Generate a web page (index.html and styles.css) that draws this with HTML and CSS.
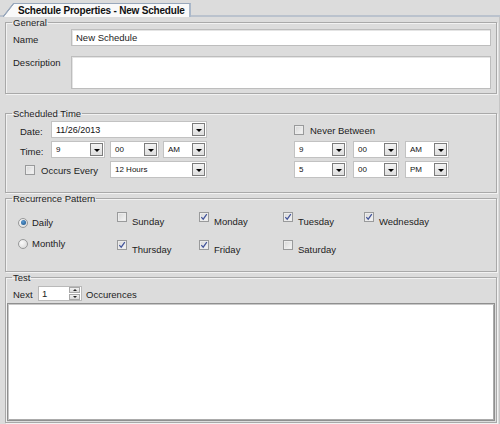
FILE: index.html
```html
<!DOCTYPE html>
<html lang="en">
<head>
    <meta charset="UTF-8">
    <title>Schedule Properties</title>
    <link rel="stylesheet" href="styles.css">
</head>
<body>
    <div class="tabs">
        <span class="tab-slant"></span>
        <span class="tab">Schedule Properties - New Schedule</span>
    </div>

    <div class="page">
        <!-- General -->
        <fieldset class="group general">
            <legend>General</legend>
            <div class="general-body">
                <span class="lbl lbl-name">Name</span>
                <div class="textbox">New Schedule</div>
                <span class="lbl">Description</span>
                <div class="textbox"></div>
            </div>
        </fieldset>

        <!-- Scheduled Time -->
        <fieldset class="group sched">
            <legend>Scheduled Time</legend>
            <div class="sched-body">
                <div class="rows">
                    <div class="row">
                        <span class="row-lbl">Date:</span>
                        <div class="combo big" style="width: 156px;"><span class="val">11/26/2013</span><span class="drop"></span></div>
                    </div>
                    <div class="row">
                        <span class="row-lbl">Time:</span>
                        <div class="combo" style="width: 54px;"><span class="val">9</span><span class="drop"></span></div>
                        <div class="combo" style="width: 49px; margin-left: 5px;"><span class="val">00</span><span class="drop"></span></div>
                        <div class="combo" style="width: 44px; margin-left: 4px;"><span class="val">AM</span><span class="drop"></span></div>
                    </div>
                    <div class="row">
                        <span class="chk occurs-chk"></span>
                        <span class="chk-lbl">Occurs Every</span>
                        <div class="combo push" style="width: 97px;"><span class="val">12 Hours</span><span class="drop"></span></div>
                    </div>
                </div>
                <div class="rows right-rows">
                    <div class="row">
                        <span class="chk"></span>
                        <span class="chk-lbl">Never Between</span>
                    </div>
                    <div class="row">
                        <div class="combo" style="width: 53px;"><span class="val">9</span><span class="drop"></span></div>
                        <div class="combo" style="width: 46px; margin-left: 6px;"><span class="val">00</span><span class="drop"></span></div>
                        <div class="combo" style="width: 44px; margin-left: 6px;"><span class="val">AM</span><span class="drop"></span></div>
                    </div>
                    <div class="row">
                        <div class="combo" style="width: 53px;"><span class="val">5</span><span class="drop"></span></div>
                        <div class="combo" style="width: 46px; margin-left: 6px;"><span class="val">00</span><span class="drop"></span></div>
                        <div class="combo" style="width: 44px; margin-left: 6px;"><span class="val">PM</span><span class="drop"></span></div>
                    </div>
                </div>
            </div>
        </fieldset>

        <!-- Recurrence Pattern -->
        <fieldset class="group recur">
            <legend>Recurrence Pattern</legend>
            <div class="recur-body">
                <div class="radios">
                    <div class="radio-item"><span class="radio on"><span class="dot"></span></span>Daily</div>
                    <div class="radio-item"><span class="radio"></span>Monthly</div>
                </div>
                <div class="days">
                    <div class="day"><span class="chk"></span><span class="day-lbl">Sunday</span></div>
                    <div class="day"><span class="chk on"><svg width="8" height="8" viewBox="0 0 8 8"><path d="M1.3 4.2 L3.2 6.2 L6.8 1.2" fill="none" stroke="#41539a" stroke-width="1.2"/></svg></span><span class="day-lbl">Monday</span></div>
                    <div class="day"><span class="chk on"><svg width="8" height="8" viewBox="0 0 8 8"><path d="M1.3 4.2 L3.2 6.2 L6.8 1.2" fill="none" stroke="#41539a" stroke-width="1.2"/></svg></span><span class="day-lbl">Tuesday</span></div>
                    <div class="day"><span class="chk on"><svg width="8" height="8" viewBox="0 0 8 8"><path d="M1.3 4.2 L3.2 6.2 L6.8 1.2" fill="none" stroke="#41539a" stroke-width="1.2"/></svg></span><span class="day-lbl">Wednesday</span></div>
                    <div class="day"><span class="chk on"><svg width="8" height="8" viewBox="0 0 8 8"><path d="M1.3 4.2 L3.2 6.2 L6.8 1.2" fill="none" stroke="#41539a" stroke-width="1.2"/></svg></span><span class="day-lbl">Thursday</span></div>
                    <div class="day"><span class="chk on"><svg width="8" height="8" viewBox="0 0 8 8"><path d="M1.3 4.2 L3.2 6.2 L6.8 1.2" fill="none" stroke="#41539a" stroke-width="1.2"/></svg></span><span class="day-lbl">Friday</span></div>
                    <div class="day"><span class="chk"></span><span class="day-lbl">Saturday</span></div>
                </div>
            </div>
        </fieldset>

        <!-- Test -->
        <fieldset class="group test">
            <legend>Test</legend>
            <div class="test-body">
                <div class="next-row">
                    <span class="next-lbl">Next</span>
                    <div class="spinner">
                        <span class="val">1</span>
                        <span class="spin-btns">
                            <span class="spin up"></span>
                            <span class="spin down"></span>
                        </span>
                    </div>
                    <span class="occ-lbl">Occurences</span>
                </div>
                <div class="results"></div>
            </div>
        </fieldset>
    </div>
</body>
</html>
```

FILE: styles.css
```css
* {
    box-sizing: border-box;
}
body {
    margin: 0;
    width: 500px;
    height: 424px;
    overflow: hidden;
    background-color: #dcdcdc;
    font-family: "Liberation Sans", Arial, sans-serif;
    font-size: 9.5px;
    color: #1c1c1c;
}

/* Tab strip */
.tabs {
    display: flex;
    align-items: flex-end;
    height: 17px;
    padding-left: 3px;
    border-bottom: 2px solid #bac2cd;
}
.tab-slant {
    width: 11px;
    height: 14px;
    margin-bottom: -2px;
    background: linear-gradient(to bottom right, transparent calc(50% - 1px), #98a7bb calc(50% - 0.4px), #98a7bb calc(50% + 0.4px), #f9f9f9 calc(50% + 1px));
}
.tab {
    height: 14px;
    margin-bottom: -2px;
    padding: 0 4px 0 4px;
    border-top: 1px solid #98a7bb;
    border-right: 2px solid #aab8ca;
    background-color: #f9f9f9;
    font-weight: bold;
    font-size: 10px;
    letter-spacing: -0.2px;
    line-height: 13px;
    color: #111;
}

.page {
    height: 407px;
    padding: 0 2px 0 5px;
    border-right: 1px solid #c6c6c6;
}

/* Group boxes */
.group {
    margin: 0;
    padding: 0;
    min-width: 0;
    border: 1px solid #a9a9a9;
    box-shadow: inset 1px 1px 0 #f2f2f2, 1px 1px 0 #f2f2f2;
}
.group legend {
    margin-left: 6px;
    padding: 0 1px;
    line-height: 11px;
    font-size: 9.5px;
    color: #1e1e1e;
}
.general {
    height: 77px;
}
.sched {
    height: 85px;
    margin-top: 14px;
}
.recur {
    height: 79px;
}
.test {
    height: 151px;
}

/* General */
.general-body {
    display: grid;
    grid-template-columns: 58px 420px;
    grid-template-rows: 17px 33px;
    row-gap: 10px;
    padding: 1px 5px 0 7px;
}
.lbl {
    line-height: 13px;
}
.lbl-name {
    padding-top: 4px;
}
.textbox {
    background-color: #fff;
    border: 1px solid #bdbdbd;
    box-shadow: inset 1px 1px 0 #e4e4e4;
    padding: 2px 4px;
    line-height: 12px;
}

/* Scheduled time */
.sched-body {
    display: flex;
    padding: 2px 0 0 14px;
}
.rows {
    display: flex;
    flex-direction: column;
    gap: 3px;
    width: 187px;
}
.right-rows {
    margin-left: 87px;
}
.row {
    display: flex;
    align-items: center;
    height: 17px;
}
.row-lbl {
    width: 31px;
    padding-top: 3px;
}
.combo {
    display: flex;
    align-items: center;
    height: 17px;
    background-color: #fff;
    border: 1px solid #c2c2c2;
}
.combo .val {
    flex: 1;
    padding-left: 4px;
    font-size: 8px;
    color: #111;
}
.combo.big .val {
    font-size: 9px;
}
.combo.push {
    margin-left: auto;
}
.drop {
    display: flex;
    justify-content: center;
    align-items: center;
    width: 13px;
    height: 13px;
    margin-right: 1px;
    border: 1px solid #7c7c7c;
    background: linear-gradient(#f3f3f3, #dedede);
}
.drop::after {
    content: "";
    margin-top: 2px;
    border-top: 3px solid #000;
    border-left: 3.5px solid transparent;
    border-right: 3.5px solid transparent;
}

/* Check boxes and radios */
.chk {
    display: inline-flex;
    justify-content: center;
    align-items: center;
    flex-shrink: 0;
    width: 10px;
    height: 10px;
    border: 1px solid #999a9b;
    background: linear-gradient(135deg, #d6d6d6, #f7f7f7);
    box-shadow: inset 0 0 0 1px #ececec;
}
.occurs-chk {
    margin-left: 5px;
}
.chk-lbl {
    margin-left: 6px;
    padding-top: 2px;
}
.recur-body {
    display: flex;
    padding: 8px 0 0 12px;
}
.radios {
    display: flex;
    flex-direction: column;
    gap: 8px;
    width: 99px;
    padding-top: 4px;
}
.radio-item {
    display: flex;
    align-items: center;
    gap: 4px;
    height: 13px;
    line-height: 13px;
}
.radio {
    display: inline-flex;
    justify-content: center;
    align-items: center;
    width: 10px;
    height: 10px;
    border-radius: 50%;
    border: 1px solid #979899;
    background: radial-gradient(circle at 35% 35%, #fafafa, #d4d4d4);
}
.radio .dot {
    width: 5px;
    height: 5px;
    border-radius: 50%;
    background: radial-gradient(circle at 40% 35%, #5d9bd3, #164f85);
}
.days {
    display: grid;
    grid-template-columns: 82px 84px 81px 80px;
    row-gap: 12px;
}
.day {
    display: flex;
    align-items: flex-start;
    height: 16px;
}
.day-lbl {
    margin: 3px 0 0 5px;
    line-height: 13px;
}

/* Test */
.test-body {
    padding: 3px 1px 0 1px;
}
.next-row {
    display: flex;
    align-items: center;
    height: 15px;
    padding-left: 6px;
}
.next-lbl {
    width: 25px;
    padding-top: 2px;
}
.spinner {
    display: flex;
    align-items: center;
    width: 44px;
    height: 15px;
    background-color: #fff;
    border: 1px solid #b9b9b9;
}
.spinner .val {
    flex: 1;
    padding-left: 3px;
}
.spin-btns {
    display: flex;
    flex-direction: column;
    gap: 1px;
    margin-right: 1px;
}
.spin {
    display: flex;
    justify-content: center;
    align-items: center;
    width: 11px;
    height: 6px;
    background: linear-gradient(#f2f2f2, #dadada);
    border: 1px solid #a8a8a8;
}
.spin.up::after {
    content: "";
    border-bottom: 2px solid #222;
    border-left: 2px solid transparent;
    border-right: 2px solid transparent;
}
.spin.down::after {
    content: "";
    border-top: 2px solid #222;
    border-left: 2px solid transparent;
    border-right: 2px solid transparent;
}
.occ-lbl {
    margin-left: 4px;
    padding-top: 2px;
}
.results {
    height: 118px;
    margin-top: 2px;
    background-color: #fff;
    border: 1px solid #8f8f8f;
    box-shadow: inset 1px 1px 0 #c8c8c8, inset -1px -1px 0 #ababab;
}
```
